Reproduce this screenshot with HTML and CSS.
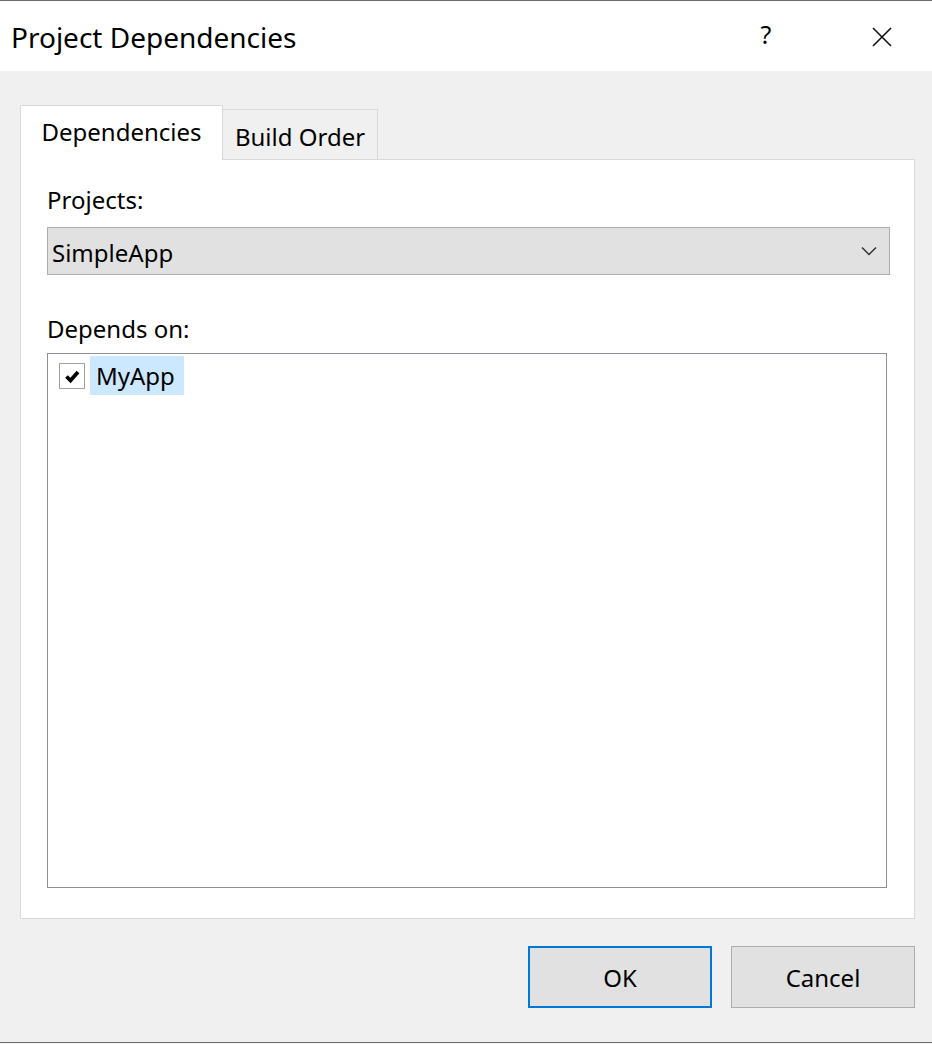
FILE: index.html
```html
<!DOCTYPE html>
<html>
<head>
<meta charset="utf-8">
<title>Project Dependencies</title>
<link rel="stylesheet" href="styles.css">
</head>
<body>
<div class="window">
  <div class="titlebar">
    <div class="title">Project Dependencies</div>
    <div class="title-btns">
      <span class="help">?</span>
      <span class="close"><svg width="20" height="20" viewBox="0 0 20 20"><path d="M1 1 L19 19 M19 1 L1 19" stroke="#111" stroke-width="1.6" fill="none"/></svg></span>
    </div>
  </div>
  <div class="content">
    <div class="tabs">
      <div class="tab active">Dependencies</div>
      <div class="tab">Build Order</div>
    </div>
    <div class="panel">
      <div class="label">Projects:</div>
      <div class="combo">
        <span class="combo-text">SimpleApp</span>
        <svg class="chev" width="16" height="10" viewBox="0 0 16 10"><path d="M1 1.5 L8 8.5 L15 1.5" stroke="#333" stroke-width="1.5" fill="none"/></svg>
      </div>
      <div class="label label2">Depends on:</div>
      <div class="list">
        <div class="row">
          <span class="check"><svg width="18" height="18" viewBox="0 0 18 18"><path d="M3.5 9.5 L7.5 13.5 L15 5" stroke="#000" stroke-width="3.8" fill="none" stroke-linejoin="miter"/></svg></span>
          <span class="item">MyApp</span>
        </div>
      </div>
    </div>
    <div class="buttons">
      <button class="btn default">OK</button>
      <button class="btn">Cancel</button>
    </div>
  </div>
</div>
</body>
</html>
```
FILE: styles.css
```css
html, body {
  margin: 0;
  padding: 0;
  background: #f0f0f0;
}
body {
  font-family: "Noto Sans", "Open Sans", sans-serif;
  color: #000;
}
.window {
  width: 932px;
  height: 1043px;
  box-sizing: border-box;
  border-top: 1px solid #6e6e6e;
  border-bottom: 1px solid #6e6e6e;
  background: #f0f0f0;
  display: flex;
  flex-direction: column;
}
.titlebar {
  height: 70px;
  background: #fff;
  display: flex;
  align-items: center;
  justify-content: space-between;
}
.title {
  font-size: 28px;
  padding-left: 11px;
  margin-top: 2px;
}
.title-btns {
  display: flex;
  align-items: center;
}
.help {
  font-size: 25px;
  width: 16px;
  text-align: center;
  margin-right: 98px;
  margin-top: -4px;
}
.close {
  display: flex;
  margin-right: 40px;
  margin-top: 2px;
}
.content {
  padding: 34px 0 0 20px;
  display: flex;
  flex-direction: column;
}
.tabs {
  display: flex;
  align-items: flex-end;
  height: 54px;
}
.tab {
  font-size: 24px;
  box-sizing: border-box;
  text-align: center;
}
.tab.active {
  width: 203px;
  height: 55px;
  background: #fff;
  border: 1px solid #d9d9d9;
  border-bottom: none;
  line-height: 52px;
  position: relative;
  z-index: 1;
  margin-bottom: -1px;
}
.tab:not(.active) {
  width: 155px;
  height: 50px;
  background: #f0f0f0;
  border: 1px solid #d9d9d9;
  border-left: none;
  border-bottom: none;
  line-height: 54px;
}
.panel {
  width: 895px;
  height: 760px;
  box-sizing: border-box;
  background: #fff;
  border: 1px solid #d9d9d9;
  padding: 24px 0 0 26px;
  display: flex;
  flex-direction: column;
}
.label {
  font-size: 24px;
  line-height: 32px;
  height: 32px;
}
.combo {
  margin-top: 11px;
  width: 843px;
  height: 48px;
  box-sizing: border-box;
  background: #e1e1e1;
  border: 1px solid #adadad;
  display: flex;
  align-items: center;
  justify-content: space-between;
  padding: 0 12px 0 4px;
}
.combo-text {
  font-size: 24px;
  margin-top: 2px;
}
.label2 {
  margin-top: 38px;
}
.list {
  margin-top: 8px;
  width: 840px;
  height: 535px;
  box-sizing: border-box;
  border: 1px solid #8c9096;
  padding: 2px 0 0 11px;
}
.row {
  display: flex;
  align-items: center;
  height: 39px;
}
.check {
  width: 26px;
  height: 26px;
  box-sizing: border-box;
  border: 1px solid #a0a0a0;
  background: #fff;
  display: flex;
  align-items: center;
  justify-content: center;
}
.item {
  margin-left: 5px;
  height: 39px;
  width: 94px;
  box-sizing: border-box;
  background: #cce8ff;
  font-size: 24px;
  line-height: 39px;
  padding-left: 6px;
}
.buttons {
  display: flex;
  justify-content: flex-end;
  gap: 19px;
  padding-right: 17px;
  margin-top: 27px;
}
.btn {
  font-family: "Noto Sans", "Open Sans", sans-serif;
  font-size: 24px;
  width: 184px;
  height: 62px;
  box-sizing: border-box;
  background: #e1e1e1;
  border: 1px solid #adadad;
  color: #000;
  padding: 0;
}
.btn.default {
  border: 2px solid #0078d7;
}
```
